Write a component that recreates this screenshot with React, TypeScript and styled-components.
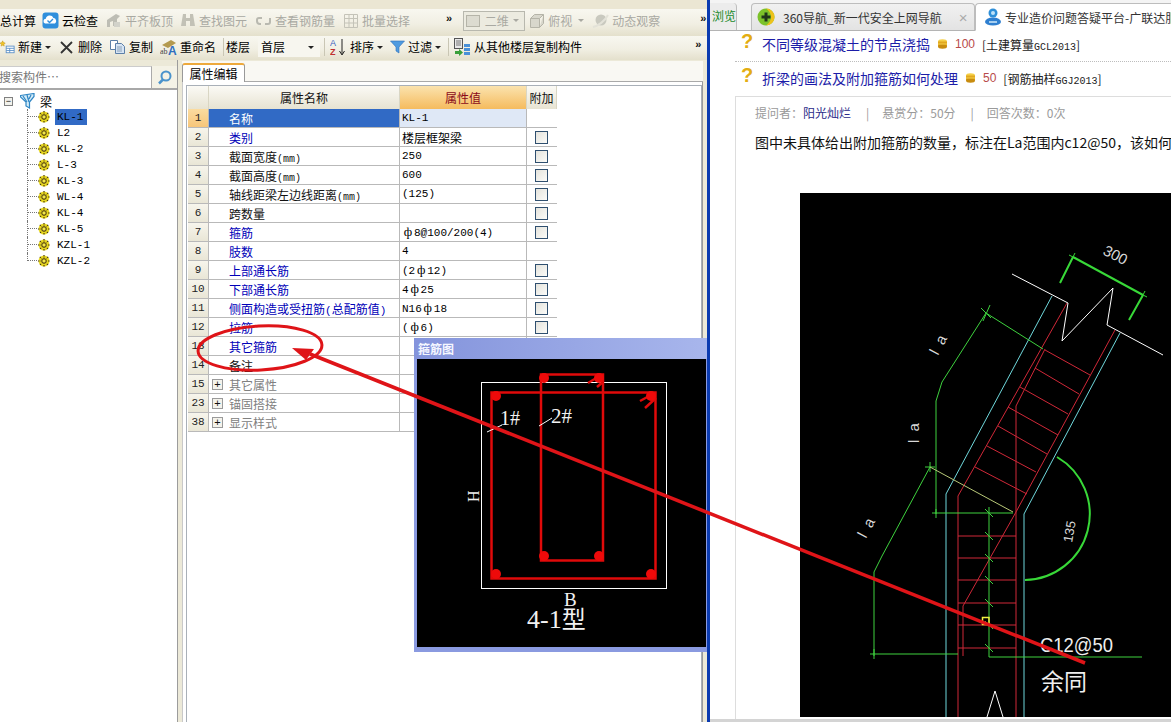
import React from "react";
import styled, { createGlobalStyle } from "styled-components";

const Global = createGlobalStyle`
  html, body { margin: 0; padding: 0; background: #fff; }
  body { font-family: "Noto Sans CJK SC", "Liberation Sans", sans-serif; font-size: 12px; color: #000; }
`;

const Page = styled.div`
  position: relative;
  width: 1171px;
  height: 722px;
  overflow: hidden;
  display: flex;
`;

const AppWindow = styled.div`
  position: relative;
  width: 707px;
  height: 722px;
  flex: none;
  display: flex;
  flex-direction: column;
  background: #ece9d8;
  overflow: hidden;
`;

const TopBand = styled.div`
  height: 9px;
  flex: none;
  background: #ebe6d3;
`;

const Toolbar = styled.div<{ $h: number; $pb: number }>`
  height: ${(p) => p.$h}px;
  flex: none;
  box-sizing: border-box;
  padding-bottom: ${(p) => p.$pb}px;
  display: flex;
  align-items: center;
  white-space: nowrap;
  background: linear-gradient(#f8f7f0, #f1efe3 55%, #e4e0cc);
  line-height: 1;
`;

const Tool = styled.div<{ $left?: number; $off?: boolean }>`
  display: flex;
  align-items: center;
  gap: 3px;
  flex: none;
  margin-left: ${(p) => p.$left ?? 0}px;
  color: ${(p) => (p.$off ? "#a9a9a2" : "#000")};
  font-size: 12px;
`;

const IconGap = styled.span<{ $w: number }>`
  margin-left: ${(p) => p.$w}px;
`;

const Caret = styled.span<{ $off?: boolean; $left?: number }>`
  width: 0;
  height: 0;
  flex: none;
  margin-left: ${(p) => p.$left ?? 0}px;
  border: 3px solid transparent;
  border-top: 3px solid ${(p) => (p.$off ? "#a9a9a2" : "#222")};
  border-bottom: 0;
`;

const Chevrons = styled.span<{ $left: number }>`
  margin-left: ${(p) => p.$left}px;
  margin-top: -6px;
  font: bold 11px "Liberation Sans", sans-serif;
  letter-spacing: -1px;
  color: #111;
`;

const Combo = styled.div<{ $left: number; $w: number; $off?: boolean }>`
  width: ${(p) => p.$w}px;
  height: 20px;
  margin-left: ${(p) => p.$left}px;
  flex: none;
  box-sizing: border-box;
  display: flex;
  align-items: center;
  padding: 0 5px 0 2px;
  justify-content: space-between;
  border: ${(p) => (p.$off ? "1px solid #b8b8ae" : "1px solid transparent")};
  background: ${(p) => (p.$off ? "#ecebe0" : "#f7f6ef")};
  color: ${(p) => (p.$off ? "#a9a9a2" : "#000")};
`;

const Sep = styled.span<{ $left: number }>`
  width: 1px;
  height: 18px;
  flex: none;
  margin-left: ${(p) => p.$left}px;
  background: #c9c6b4;
`;

const Body = styled.div`
  flex: 1;
  min-height: 0;
  display: flex;
`;

const Sidebar = styled.div`
  width: 178px;
  flex: none;
  box-sizing: border-box;
  background: #fff;
  border-right: 1px solid #9c9c9c;
  display: flex;
  flex-direction: column;
`;

const SearchRow = styled.div`
  height: 30px;
  flex: none;
  box-sizing: border-box;
  padding-top: 6px;
  display: flex;
  background: #ece9d8;
  border-bottom: 2px solid #a8a8a8;
`;

const SearchInput = styled.div`
  width: 153px;
  box-sizing: border-box;
  background: #fff;
  border-right: 1px solid #aaa;
  border-top: 1px solid #ccc;
  color: #777;
  line-height: 20px;
  font-size: 12px;
  margin-left: -1px;
`;

const SearchButton = styled.div`
  flex: 1;
  display: flex;
  align-items: center;
  justify-content: center;
  background: #f4f2e6;
  color: #3f8cc8;
`;

const Tree = styled.div`
  padding: 3px 0 0 4px;
  display: flex;
  flex-direction: column;
`;

const TreeRoot = styled.div`
  height: 16px;
  display: flex;
  align-items: center;
  gap: 5px;
  font-size: 12px;
`;

const Expander = styled.span`
  width: 9px;
  height: 9px;
  box-sizing: border-box;
  border: 1px solid #808080;
  background: #f2f2ec;
  display: flex;
  align-items: center;
  justify-content: center;
  flex: none;
  font: 9px/7px "Liberation Sans", sans-serif;
  margin-right: 2px;
`;

const TreeList = styled.div`
  margin-left: 23px;
  display: flex;
  flex-direction: column;
`;

const TreeRow = styled.div`
  height: 16px;
  display: flex;
  align-items: flex-start;
`;

const Connector = styled.span<{ $last: boolean }>`
  width: 9px;
  height: ${(p) => (p.$last ? 8 : 16)}px;
  flex: none;
  border-left: 1px dotted #777;
  background: repeating-linear-gradient(90deg, #777 0 1px, transparent 1px 2px) 0 7px / 100% 1px no-repeat;
`;

const GearSlot = styled.span`
  width: 12px;
  height: 16px;
  display: flex;
  align-items: center;
  flex: none;
  margin-left: 1px;
`;

const TreeLabel = styled.span<{ $active?: boolean }>`
  height: 16px;
  margin-left: 5px;
  padding: 0 4px 0 2px;
  font: 11px/16px "Liberation Mono", monospace;
  background: ${(p) => (p.$active ? "#316ac5" : "transparent")};
`;

const Panel = styled.div`
  flex: 1;
  min-width: 0;
  padding: 1px 0 0 4px;
  display: flex;
  flex-direction: column;
  background: #ece9d8;
`;

const TabStrip = styled.div`
  height: 20px;
  flex: none;
  display: flex;
  align-items: flex-end;
  background: #f9f8f3;
  border-bottom: 1px solid #a9a9a9;
  margin-right: 4px;
`;

const PanelTab = styled.div`
  width: 63px;
  height: 19px;
  box-sizing: border-box;
  background: #fff;
  border: 1px solid #999;
  border-top: 2px solid #eda93c;
  border-bottom: 0;
  border-radius: 3px 3px 0 0;
  margin-bottom: -1px;
  text-align: center;
  font-size: 12px;
  line-height: 17px;
`;

const PanelBody = styled.div`
  flex: 1;
  min-height: 0;
  background: #fff;
  margin-right: 4px;
  padding: 3px 0 0 3px;
  border-left: 1px solid #c9c9c9;
  border-right: 1px solid #9a9a9a;
`;

const GridFrame = styled.div`
  height: 100%;
  box-sizing: border-box;
  padding-left: 1px;
  background: #fff;
  border: 1px solid #a9b0b8;
  border-bottom: 0;
`;

const PropGrid = styled.div`
  display: grid;
  grid-template-columns: 21px 191px 127px 30px;
  grid-template-rows: 23px;
  grid-auto-rows: 19px;
  width: 369px;
`;

const HeadCell = styled.div<{ $hot?: boolean }>`
  box-sizing: border-box;
  display: flex;
  align-items: center;
  justify-content: center;
  border-right: 1px solid #d9d6c4;
  background: ${(p) => (p.$hot ? "linear-gradient(#fbe3ae,#f5bb5e)" : "linear-gradient(#fbfaf5,#e7e3d2)")};
  color: ${(p) => (p.$hot ? "#8b0a1a" : "#111")};
  font-size: 12px;
`;

const NumCell = styled.div<{ $hot?: boolean }>`
  box-sizing: border-box;
  border-bottom: 1px solid #b9b9b9;
  border-right: 1px solid #b9b9b9;
  background: ${(p) => (p.$hot ? "linear-gradient(#fbdca0,#f7c67a)" : "linear-gradient(#f7f5ec,#e9e6d6)")};
  display: flex;
  align-items: center;
  justify-content: center;
  font: 11px "Liberation Mono", monospace;
  color: #222;
`;

const NameCell = styled.div<{ $kind: string; $selected?: boolean }>`
  box-sizing: border-box;
  border-bottom: 1px solid #b9b9b9;
  border-right: 1px solid #b9b9b9;
  display: flex;
  align-items: center;
  padding-left: ${(p) => (p.$kind === "group" ? 3 : 20)}px;
  gap: 6px;
  font-size: 12px;
  white-space: nowrap;
  background: ${(p) => (p.$selected ? "#316ac5" : "#fff")};
  color: ${(p) => (p.$selected ? "#fff" : p.$kind === "link" ? "#0000b8" : p.$kind === "group" ? "#808080" : "#111")};
`;

const ValueCell = styled.div<{ $selected?: boolean }>`
  box-sizing: border-box;
  border-bottom: 1px solid #b9b9b9;
  border-right: 1px solid #b9b9b9;
  display: flex;
  align-items: center;
  padding-left: 2px;
  font-size: 12px;
  white-space: nowrap;
  background: ${(p) => (p.$selected ? "#dfe8f6" : "#fff")};
`;

const ExtraCell = styled.div`
  box-sizing: border-box;
  border-bottom: 1px solid #b9b9b9;
  display: flex;
  align-items: center;
  justify-content: center;
  padding-right: 2px;
`;

const Check = styled.span`
  width: 13px;
  height: 13px;
  box-sizing: border-box;
  border: 1px solid #2f4f6f;
  background: linear-gradient(135deg, #e4e3dc, #fbfbf8);
`;

const PlusBox = styled.span`
  width: 11px;
  height: 11px;
  box-sizing: border-box;
  border: 1px solid #9a9a9a;
  background: #f4f3ec;
  color: #111;
  display: flex;
  align-items: center;
  justify-content: center;
  font: 11px/9px "Liberation Sans", sans-serif;
`;

const Lat = styled.span<{ $size?: number }>`
  font-family: "Liberation Mono", monospace;
  font-size: ${(p) => p.$size ?? 11}px;
`;

const BarMark = styled.span`
  display: inline-block;
  width: 12px;
  text-align: center;
  font-family: "Liberation Serif", serif;
  font-size: 13px;
`;

const Dialog = styled.div`
  position: absolute;
  left: 414px;
  top: 338px;
  width: 293px;
  height: 314px;
  box-sizing: border-box;
  padding: 0 0 5px 3px;
  display: flex;
  flex-direction: column;
  background: #8a9ae0;
  z-index: 2;
`;

const DialogTitle = styled.div`
  height: 21px;
  flex: none;
  box-sizing: border-box;
  display: flex;
  align-items: center;
  color: #f4f6ff;
  font-size: 12px;
  font-weight: 700;
  background: linear-gradient(90deg, #8494dc, #a8b6ec);
  margin-left: -3px;
  padding-left: 4px;
`;

const DialogCanvas = styled.svg`
  display: block;
  flex: none;
  background: #000;
`;

const Divider = styled.div`
  width: 3px;
  flex: none;
  background: #0b3bb0;
`;

const Browser = styled.div`
  flex: 1;
  min-width: 0;
  display: flex;
  flex-direction: column;
  background: #fff;
  overflow: hidden;
`;

const BrowserTabs = styled.div`
  height: 31px;
  flex: none;
  box-sizing: border-box;
  padding-top: 3px;
  display: flex;
  align-items: stretch;
  background: #f4f4f4;
  border-bottom: 1px solid #b4b4b4;
  white-space: nowrap;
`;

const SideLabel = styled.div`
  width: 27px;
  box-sizing: border-box;
  padding-left: 2px;
  line-height: 25px;
  font-size: 12px;
  color: #1a8a2a;
  border-right: 1px solid #bdbdbd;
  border-radius: 0 4px 0 0;
  background: #ececec;
`;

const BrowserTab = styled.div<{ $active?: boolean; $left: number; $w: number }>`
  width: ${(p) => p.$w}px;
  flex: none;
  margin-left: ${(p) => p.$left}px;
  box-sizing: border-box;
  padding-left: ${(p) => (p.$active ? 8 : 5)}px;
  display: flex;
  align-items: center;
  gap: ${(p) => (p.$active ? 3 : 8)}px;
  font-size: 12px;
  color: #333;
  overflow: hidden;
  background: ${(p) => (p.$active ? "#fff" : "linear-gradient(#f1f1f1,#e3e3e3)")};
  border: 1px solid #bdbdbd;
  border-bottom: ${(p) => (p.$active ? "1px solid #fff" : "0")};
  border-right: ${(p) => (p.$active ? "0" : "1px solid #bdbdbd")};
  border-radius: 4px 4px 0 0;
  margin-bottom: ${(p) => (p.$active ? "-1px" : "0")};
  svg { flex: none; }
`;

const CloseX = styled.span`
  margin-left: 9px;
  color: #aaa;
  font: 15px "Liberation Sans", sans-serif;
`;

const Article = styled.div`
  flex: 1;
  min-height: 0;
  padding-left: 25px;
  display: flex;
  flex-direction: column;
`;

const Question = styled.div<{ $h: number; $pb: number; $dotted?: boolean }>`
  height: ${(p) => p.$h}px;
  flex: none;
  box-sizing: border-box;
  padding-left: 6px;
  padding-bottom: ${(p) => p.$pb}px;
  display: flex;
  align-items: center;
  white-space: nowrap;
  border-bottom: ${(p) => (p.$dotted ? "1px dotted #bdbdbd" : "0")};
`;

const QMark = styled.span`
  width: 21px;
  flex: none;
  margin-top: -6px;
  font: bold 20px "Liberation Sans", sans-serif;
  color: #e3ad12;
`;

const QLink = styled.span`
  font-size: 14px;
  color: #1c1ca8;
`;

const Coin = styled.svg`
  margin-left: 8px;
  flex: none;
`;

const Points = styled.span`
  margin-left: 8px;
  font: 12px "Liberation Sans", sans-serif;
  color: #b84a4a;
`;

const QTag = styled.span`
  margin-left: 7px;
  font-size: 12px;
  color: #222;
`;

const DetailBox = styled.div`
  flex: 1;
  min-height: 0;
  border-top: 1px solid #ddd;
  border-left: 1px solid #ddd;
  padding: 7px 0 0 19px;
  display: flex;
  flex-direction: column;
  overflow: hidden;
`;

const Meta = styled.div`
  height: 17px;
  flex: none;
  display: flex;
  align-items: center;
  color: #9a9a9a;
  font-size: 12px;
  white-space: nowrap;
`;

const MetaSep = styled.span`
  margin: 0 13px 0 15px;
`;

const Asker = styled.span`
  color: #2a2a88;
`;

const Para = styled.div`
  margin-top: 9px;
  flex: none;
  font-size: 14px;
  line-height: 24px;
  white-space: nowrap;
  color: #111;
`;

const CadImage = styled.svg`
  display: block;
  flex: none;
  margin: 39px 0 0 45px;
  background: #000;
`;

const BottomRule = styled.div`
  height: 3px;
  flex: none;
  background: #d4d4d4;
`;

const Overlay = styled.svg`
  position: absolute;
  left: 0;
  top: 0;
  z-index: 5;
  pointer-events: none;
`;

/* ---------- icons ---------- */

const CloudIcon = () => (
  <svg width="17" height="17" viewBox="0 0 17 17">
    <rect x="0.5" y="0.5" width="16" height="16" rx="3" fill="#2f8fdc" />
    <path d="M3 11.5a2.5 2.5 0 0 1 .8-4.8 4 4 0 0 1 7.6-.6 3 3 0 0 1 1.6 5.4z" fill="#fff" />
    <path d="M5.5 8.5l2 2 3.5-3.5" stroke="#2f8fdc" strokeWidth="1.4" fill="none" />
  </svg>
);
const AlignIcon = () => (
  <svg width="17" height="17" viewBox="0 0 17 17" fill="#bdbdb4">
    <path d="M2 8l9-6 4 2-3 3v7H8V9l-3 1v5H2z" />
    <rect x="9" y="10" width="6" height="5" fill="#d2d2ca" />
  </svg>
);
const BinocularIcon = () => (
  <svg width="16" height="15" viewBox="0 0 16 15" fill="#c2c1b6">
    <path d="M3 1h3v4h4V1h3l2 12h-5V8H6v5H1z" />
  </svg>
);
const RebarViewIcon = () => (
  <svg width="15" height="10" viewBox="0 0 15 10" fill="none" stroke="#b9b9b0" strokeWidth="2">
    <path d="M6 2H3a2 2 0 0 0-2 2v1a3 3 0 0 0 3 3h1M9 8h3a2 2 0 0 0 2-2V2" />
  </svg>
);
const BatchIcon = () => (
  <svg width="16" height="16" viewBox="0 0 16 16" fill="none" stroke="#c4c3b8">
    <path d="M1.5 1.5h13v13h-13zM1.5 5.5h13M1.5 10h13M6 1.5v13M10.5 1.5v13" />
  </svg>
);
const BoxIcon = () => (
  <svg width="16" height="16" viewBox="0 0 16 16" fill="#d8d7cc" stroke="#b5b4a8">
    <path d="M1.5 5.5h9v9h-9zM1.5 5.5l4-4h9l-4 4M10.5 14.5l4-4v-9" />
  </svg>
);
const OrbitIcon = () => (
  <svg width="17" height="16" viewBox="0 0 17 16">
    <circle cx="9" cy="7" r="5.5" fill="#c9c9bf" />
    <path d="M1 14C6 13 13 8 16 2" stroke="#e3e2d8" strokeWidth="2" fill="none" />
  </svg>
);
const FlatIcon = () => (
  <svg width="14" height="12" viewBox="0 0 14 12" fill="#dcdbd0" stroke="#b5b4a8">
    <rect x="0.5" y="0.5" width="13" height="11" />
  </svg>
);
const NewIcon = () => (
  <svg width="15" height="14" viewBox="0 0 17 14">
    <path d="M3 0l1 2 2 .5-1.500 1.500.3 2L3 5l-1.800 1 .3-2L0 2.500 2 2z" fill="#f0c428" stroke="#b98a10" strokeWidth=".5" />
    <rect x="7" y="6" width="9" height="7.500" fill="#fff" stroke="#5a8fc8" />
    <path d="M7 8.500h9M7 11h9M11 8.500v5" stroke="#5a8fc8" />
  </svg>
);
const DeleteIcon = () => (
  <svg width="13" height="13" viewBox="0 0 13 13" stroke="#333" strokeWidth="1.800">
    <path d="M1 1l11 11M12 1L1 12" />
  </svg>
);
const CopyIcon = () => (
  <svg width="15" height="14" viewBox="0 0 15 14" fill="#fff" stroke="#5c7fa8">
    <path d="M.5.500h7v9h-7z" />
    <path d="M5.500 3.500h6l3 3v7h-9z" fill="#d6e4f4" />
    <path d="M7 7h5M7 9h5M7 11h5" stroke="#7a8fa8" strokeWidth=".8" />
  </svg>
);
const RenameIcon = () => (
  <svg width="17" height="17" viewBox="0 0 17 17">
    <path d="M2 6l9-5 5 3-8 5z" fill="#b49a50" />
    <text x="0" y="15" fontSize="8" fontFamily="Liberation Serif" fill="#444">ab</text>
    <text x="8" y="16" fontSize="12" fontWeight="700" fontFamily="Liberation Sans" fill="#2f6fc0">A</text>
  </svg>
);
const SortIcon = () => (
  <svg width="16" height="18" viewBox="0 0 16 18">
    <text x="0" y="8" fontSize="9" fontFamily="Liberation Sans" fill="#3a5fc0">A</text>
    <text x="0" y="17" fontSize="9" fontWeight="700" fontFamily="Liberation Sans" fill="#c03030">Z</text>
    <path d="M12 1v15M9.500 13l2.500 4 2.500-4" stroke="#222" fill="none" />
  </svg>
);
const FilterIcon = () => (
  <svg width="15" height="14" viewBox="0 0 15 14">
    <path d="M.5 1h14L9 7v6L6 11V7z" fill="#4f9be0" stroke="#2f6fb8" strokeWidth=".6" />
  </svg>
);
const CopyFloorIcon = () => (
  <svg width="18" height="18" viewBox="0 0 18 18">
    <rect x="1.500" y=".5" width="8" height="10" fill="#e8e8e8" stroke="#555" />
    <path d="M3 3h5M3 5h5M3 7h5" stroke="#777" />
    <path d="M2 13h4v-2l4 3.500L6 18v-2H2z" fill="#3aa03a" />
    <path d="M11 6h6v3h-6zM11 10h6v3h-6zM11 14h6v3h-6z" fill="#4a90d8" />
  </svg>
);
const SearchGlass = () => (
  <svg width="15" height="15" viewBox="0 0 15 15" fill="none" stroke="#4a93cc" strokeWidth="2">
    <circle cx="9" cy="6" r="4.500" />
    <path d="M6 9.500L2 13.500" strokeWidth="2.500" />
  </svg>
);
const FolderFunnel = () => (
  <svg width="15" height="16" viewBox="0 0 15 16" fill="none" stroke="#2f86c4" strokeWidth="1.200">
    <path d="M.5 2.500L14 .5v3L9.500 9v6L6 13V9L.5 4z" fill="#d4ecf8" />
    <path d="M3 3l4 6M7 2l2 7M11 2L9 6" />
  </svg>
);
const Gear = () => (
  <svg width="12" height="12" viewBox="0 0 12 12">
    <circle cx="6" cy="6" r="5.500" fill="#e8d820" />
    <path d="M6 0v12M0 6h12M1.800 1.800l8.400 8.400M10.200 1.800L1.800 10.200" stroke="#4a3a10" strokeWidth="1.200" strokeDasharray="1.500 1" />
    <circle cx="6" cy="6" r="2" fill="#f2e84a" stroke="#4a3a10" strokeWidth=".7" />
  </svg>
);
const Logo360 = () => (
  <svg width="18" height="18" viewBox="0 0 18 18">
    <circle cx="9" cy="9" r="8.500" fill="#7cc22a" />
    <path d="M9 .5a8.500 8.500 0 0 1 8.500 8.500c0 4.700-3.800 8.500-8.500 8.500 3-2 5-5 5-8.500S12 2.500 9 .5z" fill="#eec21a" />
    <path d="M7.500 4.500h3v3h3v3h-3v3h-3v-3h-3v-3h3z" fill="#20361a" />
  </svg>
);
const LogoGld = () => (
  <svg width="18" height="18" viewBox="0 0 18 18">
    <circle cx="9" cy="5" r="4.500" fill="#2f8fd8" />
    <circle cx="9" cy="5" r="2" fill="#bfe2f8" />
    <path d="M1 14a8 4.500 0 0 1 16 0 8 3.500 0 0 1-16 0z" fill="#2f7fd0" />
    <path d="M5 14h8" stroke="#cfe8fa" strokeWidth="1.500" />
  </svg>
);
const CoinIcon = () => (
  <Coin width="9" height="10" viewBox="0 0 9 10">
    <ellipse cx="4.500" cy="2.500" rx="4.500" ry="2.200" fill="#f5d048" />
    <rect x="0" y="2.500" width="9" height="5" fill="#e2a820" />
    <ellipse cx="4.500" cy="7.500" rx="4.500" ry="2.200" fill="#c88c10" />
    <path d="M0 5h9" stroke="#f5d048" />
  </Coin>
);

/* ---------- data ---------- */

const treeItems = ["KL-1", "L2", "KL-2", "L-3", "KL-3", "WL-4", "KL-4", "KL-5", "KZL-1", "KZL-2"];

type Row = { n: number; name: React.ReactNode; kind: "plain" | "link" | "group"; value?: React.ReactNode; check?: boolean };

const rows: Row[] = [
  { n: 1, name: "名称", kind: "plain", value: <Lat>KL-1</Lat> },
  { n: 2, name: "类别", kind: "link", value: "楼层框架梁", check: true },
  { n: 3, name: <>截面宽度<Lat $size={10}>(mm)</Lat></>, kind: "plain", value: <Lat>250</Lat>, check: true },
  { n: 4, name: <>截面高度<Lat $size={10}>(mm)</Lat></>, kind: "plain", value: <Lat>600</Lat>, check: true },
  { n: 5, name: <>轴线距梁左边线距离<Lat $size={10}>(mm)</Lat></>, kind: "plain", value: <Lat>(125)</Lat>, check: true },
  { n: 6, name: "跨数量", kind: "plain", check: true },
  { n: 7, name: "箍筋", kind: "link", value: <Lat><BarMark>ф</BarMark>8@100/200(4)</Lat>, check: true },
  { n: 8, name: "肢数", kind: "link", value: <Lat>4</Lat> },
  { n: 9, name: "上部通长筋", kind: "link", value: <Lat>(2<BarMark>ф</BarMark>12)</Lat>, check: true },
  { n: 10, name: "下部通长筋", kind: "link", value: <Lat>4<BarMark>ф</BarMark>25</Lat>, check: true },
  { n: 11, name: <>侧面构造或受扭筋<Lat $size={11}>(</Lat>总配筋值<Lat $size={11}>)</Lat></>, kind: "link", value: <Lat>N16<BarMark>ф</BarMark>18</Lat>, check: true },
  { n: 12, name: "拉筋", kind: "link", value: <Lat>(<BarMark>ф</BarMark>6)</Lat>, check: true },
  { n: 13, name: "其它箍筋", kind: "link" },
  { n: 14, name: "备注", kind: "plain" },
  { n: 15, name: "其它属性", kind: "group" },
  { n: 23, name: "锚固搭接", kind: "group" },
  { n: 38, name: "显示样式", kind: "group" },
];

/* ---------- drawings ---------- */

const Stirrup = () => (
  <DialogCanvas width="289" height="288" viewBox="417 359 289 288">
    <rect x="481.500" y="382.500" width="185" height="206" fill="none" stroke="#fff" />
    <g fill="none" stroke="#e00a0a" strokeWidth="2.500">
      <rect x="491.500" y="392.500" width="164" height="186" />
      <rect x="541" y="374.500" width="62" height="186" />
      <path d="M640 401l11-6M645 408l11-10M588 383l10-6M597 387l6-5" />
    </g>
    <g fill="#ee0a0a">
      <circle cx="496" cy="396" r="5" />
      <circle cx="651" cy="396" r="5" />
      <circle cx="496" cy="574" r="5" />
      <circle cx="651" cy="574" r="5" />
      <circle cx="544" cy="378" r="5" />
      <circle cx="599" cy="378" r="5" />
      <circle cx="544" cy="556" r="5" />
      <circle cx="599" cy="556" r="5" />
    </g>
    <path d="M487 432l15-7M539 426l13-8" stroke="#fff" />
    <g fill="#f2f2f2" fontFamily="Liberation Serif, serif">
      <text x="500" y="425" fontSize="20">1#</text>
      <text x="551" y="423" fontSize="21">2#</text>
      <text x="0" y="0" fontSize="16" transform="translate(479 502) rotate(-90)">H</text>
      <text x="564" y="606" fontSize="19">B</text>
      <text x="527" y="628" fontSize="26">4-1<tspan fontFamily="Noto Sans CJK SC" fontSize="24">型</tspan></text>
    </g>
  </DialogCanvas>
);

const hoopsH = [537, 559, 581, 604, 626, 649];
const ticksY = [514, 537, 559, 581, 604, 626, 649];

const CadDrawing = () => (
  <CadImage width="371" height="524" viewBox="800 194 371 524">
    <g fill="none" stroke="#6fd8dc" strokeWidth="1">
      <path d="M1052 297L946 495V718" />
      <path d="M1120 334L1024 515V718" />
    </g>
    <g fill="none" stroke="#d02838" strokeWidth="1">
      <path d="M1067 304L958 497V718" />
      <path d="M1115 331L1016 513V718" />
      <path d="M1045 350L1016 407V513" />
      <path d="M1016 513L963 607V657" />
      <path d="M1045 351L1090 376M1035 369L1079 395M1020 388L1068 415M1008 408L1058 436M998 427L1047 455M987 447L1036 473M975 468L1027 495" />
      {hoopsH.map((y) => (
        <path key={y} d={`M958 ${y}H1016`} />
      ))}
    </g>
    <g fill="none" stroke="#fff" strokeWidth="1">
      <path d="M1012 275L1068 304L1062 342L1113 289L1107 326L1163 356" />
      <path d="M987 718L995 692L1003 718" />
    </g>
    <g fill="none" stroke="#3ed23e" strokeWidth="1">
      <path d="M986 314L942 383L936 402V515" />
      <path d="M986 314L1043 350" />
      <path d="M981 309L991 319M990 306L983 322" />
      <path d="M930 468L882 557L874 573V657" />
      <path d="M925 468H935M930 463V473" />
      <path d="M870 655H958M874 650V660" />
      <path d="M932 514H1013M936 510V519" />
      <path d="M989 508V658H1142" />
      {ticksY.map((y) => (
        <path key={y} d={`M985 ${y - 4}L993 ${y + 4}`} />
      ))}
    </g>
    <path d="M930 468L1013 513" fill="none" stroke="#b8c878" />
    <g fill="none" stroke="#38d838" strokeWidth="2">
      <path d="M1073 258L1143 296M1073 258L1060 284M1143 296L1129 321" />
      <path d="M1057 458A66 66 0 0 1 1025 581" />
    </g>
    <path d="M1069 256L1077 260M1075 254L1071 262M1139 294L1147 298M1145 292L1141 300" stroke="#38d838" />
    <rect x="982.500" y="618.500" width="6.500" height="7" fill="none" stroke="#f0f040" strokeWidth="1.500" />
    <g fill="#d8d8d8" fontFamily="Liberation Sans, sans-serif" fontSize="15">
      <text transform="translate(1102 255) rotate(27)">300</text>
      <text transform="translate(938 357) rotate(-62)" letterSpacing="2">l a</text>
      <text transform="translate(919 444) rotate(-90)" letterSpacing="2">l a</text>
      <text transform="translate(866 540) rotate(-62)" letterSpacing="2">l a</text>
      <text fontSize="13" transform="translate(1072 544) rotate(-80)">135</text>
    </g>
    <text x="1040" y="653" fill="#efefef" fontFamily="Liberation Sans, sans-serif" fontSize="21" textLength="73" lengthAdjust="spacingAndGlyphs">C12@50</text>
    <text x="1041" y="691" fill="#efefef" fontFamily="Noto Sans CJK SC, sans-serif" fontSize="23">余同</text>
  </CadImage>
);

const Annotation = () => (
  <Overlay width="1171" height="722" viewBox="0 0 1171 722">
    <ellipse cx="260" cy="348" rx="62" ry="22" fill="none" stroke="#df1418" strokeWidth="3" transform="rotate(-3 260 348)" />
    <path d="M1085 663L310 354" stroke="#df1418" strokeWidth="3.500" fill="none" />
    <path d="M292 348L314 349L306 360z" fill="#df1418" />
  </Overlay>
);

/* ---------- page ---------- */

export default function App() {
  return (
    <Page>
      <Global />
      <AppWindow>
        <TopBand />
        <Toolbar $h={27} $pb={4}>
          <Tool>总计算</Tool>
          <Tool $left={6}><CloudIcon />云检查</Tool>
          <Tool $left={7} $off><AlignIcon />平齐板顶</Tool>
          <Tool $left={7} $off><BinocularIcon />查找图元</Tool>
          <Tool $left={9} $off><RebarViewIcon /><IconGap $w={1}>查看钢筋量</IconGap></Tool>
          <Tool $left={8} $off><BatchIcon />批量选择</Tool>
          <Chevrons $left={36}>»</Chevrons>
          <Combo $left={12} $w={62} $off><FlatIcon />二维<Caret $off /></Combo>
          <Tool $left={4} $off><BoxIcon />俯视<Caret $off $left={3} /></Tool>
          <Tool $left={8} $off><OrbitIcon />动态观察</Tool>
          <Chevrons $left={40}>»</Chevrons>
        </Toolbar>
        <Toolbar $h={24} $pb={2}>
          <Tool><NewIcon />新建<Caret /></Tool>
          <Tool $left={9}><DeleteIcon /><IconGap $w={2}>删除</IconGap></Tool>
          <Tool $left={8}><CopyIcon /><IconGap $w={1}>复制</IconGap></Tool>
          <Tool $left={7}><RenameIcon />重命名</Tool>
          <Sep $left={7} />
          <Tool $left={2}>楼层</Tool>
          <Combo $left={8} $w={62}>首层<Caret /></Combo>
          <Sep $left={4} />
          <Tool $left={5}><SortIcon /><IconGap $w={1}>排序</IconGap><Caret /></Tool>
          <Tool $left={7}><FilterIcon />过滤<Caret /></Tool>
          <Sep $left={7} />
          <Tool $left={4}><CopyFloorIcon />从其他楼层复制构件</Tool>
          <Chevrons $left={113}>»</Chevrons>
        </Toolbar>
        <Body>
          <Sidebar>
            <SearchRow>
              <SearchInput>搜索构件…</SearchInput>
              <SearchButton><SearchGlass /></SearchButton>
            </SearchRow>
            <Tree>
              <TreeRoot>
                <Expander>−</Expander>
                <FolderFunnel />
                <span>梁</span>
              </TreeRoot>
              <TreeList>
                {treeItems.map((t, i) => (
                  <TreeRow key={t}>
                    <Connector $last={i === treeItems.length - 1} />
                    <GearSlot><Gear /></GearSlot>
                    <TreeLabel $active={i === 0}>{t}</TreeLabel>
                  </TreeRow>
                ))}
              </TreeList>
            </Tree>
          </Sidebar>
          <Panel>
            <TabStrip><PanelTab>属性编辑</PanelTab></TabStrip>
            <PanelBody>
              <GridFrame>
                <PropGrid>
                  <HeadCell />
                  <HeadCell>属性名称</HeadCell>
                  <HeadCell $hot>属性值</HeadCell>
                  <HeadCell>附加</HeadCell>
                  {rows.map((r, i) => (
                    <React.Fragment key={r.n}>
                      <NumCell $hot={i === 0}>{r.n}</NumCell>
                      <NameCell $kind={r.kind} $selected={i === 0}>
                        {r.kind === "group" && <PlusBox>+</PlusBox>}
                        <span>{r.name}</span>
                      </NameCell>
                      <ValueCell $selected={i === 0}>{r.value}</ValueCell>
                      <ExtraCell>{r.check && <Check />}</ExtraCell>
                    </React.Fragment>
                  ))}
                </PropGrid>
              </GridFrame>
            </PanelBody>
          </Panel>
        </Body>
        <Dialog>
          <DialogTitle>箍筋图</DialogTitle>
          <Stirrup />
        </Dialog>
      </AppWindow>
      <Divider />
      <Browser>
        <BrowserTabs>
          <SideLabel>浏览</SideLabel>
          <BrowserTab $left={14} $w={224}>
            <Logo360 />
            <span>360导航_新一代安全上网导航</span>
            <CloseX>×</CloseX>
          </BrowserTab>
          <BrowserTab $active $left={0} $w={200}>
            <LogoGld />
            <span>专业造价问题答疑平台-广联达服务</span>
          </BrowserTab>
        </BrowserTabs>
        <Article>
          <Question $h={31} $pb={4} $dotted>
            <QMark>?</QMark>
            <QLink>不同等级混凝土的节点浇捣</QLink>
            <CoinIcon />
            <Points>100</Points>
            <QTag>[土建算量<Lat $size={10}>GCL2013</Lat>]</QTag>
          </Question>
          <Question $h={34} $pb={2}>
            <QMark>?</QMark>
            <QLink>折梁的画法及附加箍筋如何处理</QLink>
            <CoinIcon />
            <Points>50</Points>
            <QTag>[钢筋抽样<Lat $size={10}>GGJ2013</Lat>]</QTag>
          </Question>
          <DetailBox>
            <Meta>
              提问者：<Asker>阳光灿烂</Asker>
              <MetaSep>|</MetaSep>
              悬赏分：50分
              <MetaSep>|</MetaSep>
              回答次数：0次
            </Meta>
            <Para>图中未具体给出附加箍筋的数量，标注在La范围内c12@50，该如何处理？</Para>
            <CadDrawing />
          </DetailBox>
        </Article>
        <BottomRule />
      </Browser>
      <Annotation />
    </Page>
  );
}
